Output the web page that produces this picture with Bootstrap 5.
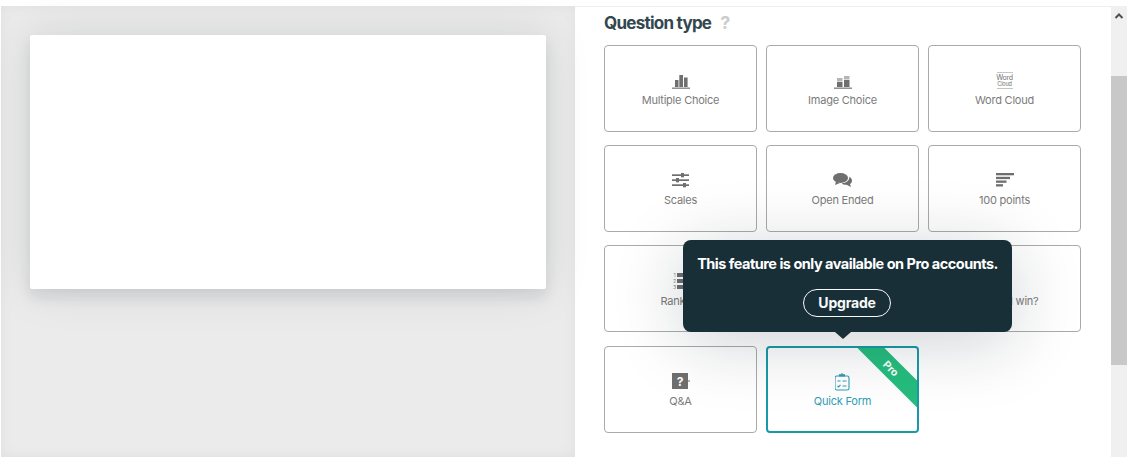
<!DOCTYPE html>
<html lang="en">
<head>
<meta charset="utf-8">
<title>Question type</title>
<link href="https://cdn.jsdelivr.net/npm/bootstrap@5.3.0/dist/css/bootstrap.min.css" rel="stylesheet">
<style>
html,body{height:457px;overflow:hidden;background:#fff;font-family:Inter,"Liberation Sans",sans-serif}
.app-shell{height:451px;margin-top:6px;padding-left:1px}
.stage-pane{width:574px;flex:none;background:#ebebeb;padding:29px 29px 0;box-shadow:inset 0 0 14px rgba(0,20,30,.05)}
.slide-sheet{height:254px;background:#fff;border-radius:2px;box-shadow:0 0 48px rgba(0,30,40,.11),0 8px 14px rgba(0,20,30,.09)}
.editor-pane{width:536px;flex:none;border-top:1px solid #eee;padding:0 0 0 29px;position:relative}
.pane-title{height:38px;color:#33474f;font-size:17px;font-weight:700;letter-spacing:-.75px;margin:0;padding-top:3px;line-height:26px}
.help-mark{color:#ccc;margin-left:9px;letter-spacing:0;font-size:18px}
.type-grid{display:grid;grid-template-columns:repeat(3,153px);grid-auto-rows:87px;column-gap:9px;row-gap:13.2px}
.type-tile{border:1px solid #aaa;border-radius:4px;color:#7b7b7b;font-size:11px;letter-spacing:-.22px;position:relative;overflow:hidden;background:transparent}
.tile-art{height:20px;margin-top:4px}
.type-tile.is-picked{border:2px solid #1a9aa8;color:#2f9db5}
.pro-ribbon{position:absolute;top:0;right:0;width:60px;height:60px;background:#26bd7e;clip-path:polygon(0 0,27px 0,60px 33px,60px 60px)}
.pro-ribbon span{position:absolute;left:25px;top:14px;color:#fff;font-size:10.5px;font-weight:700;line-height:14px;transform:rotate(45deg)}
.cloud-art{width:18px;height:20px;color:#6f6f6f;text-align:center;letter-spacing:-.2px;margin-top:3px;margin-bottom:1px}
.cloud-art i{display:block;height:1px;background:#c4c4c4;margin:1px}
.cloud-art b{display:block;font-weight:400;font-size:7px;line-height:7px}
.cloud-art b+b{font-size:5.5px;line-height:6px}
.pro-tip{position:absolute;left:108px;top:233px;width:329px;height:92px;background:#182f38;border-radius:8px;color:#fff;box-shadow:0 10px 70px rgba(0,25,35,.2);text-align:center;padding-top:14px}
.pro-tip::after{content:"";position:absolute;left:152px;bottom:-7px;border-style:solid;border-width:7px 8px 0;border-color:#182f38 transparent transparent}
.pro-tip p{margin:0 0 16px;font-size:14.5px;font-weight:700;letter-spacing:-.5px;line-height:19px}
.upgrade-btn{--bs-btn-padding-y:0;--bs-btn-padding-x:0;width:88px;height:28px;line-height:26px;font-size:14px;font-weight:700;letter-spacing:-.2px;margin-right:1px}
.scroll-rail{width:16px;background:#f0f0f0;flex:none}
.scroll-up{height:16px;display:block;margin:2px auto 0}
.scroll-thumb{height:289px;background:#c8c8c8;margin-top:52px}
</style>
</head>
<body>
<div class="app-shell d-flex">
  <div class="stage-pane"><div class="slide-sheet"></div></div>
  <div class="editor-pane">
    <h2 class="pane-title">Question type<span class="help-mark">?</span></h2>
    <div class="type-grid">
      <div class="type-tile d-flex flex-column align-items-center justify-content-center">
        <svg class="tile-art" width="18" height="20" viewBox="0 -2 18 20" fill="#6f6f6f"><rect x="3" y="6" width="3.500" height="7"/><rect x="7.300" y="1" width="3.700" height="12"/><rect x="12" y="3.500" width="3.600" height="9.500"/><rect y="13.500" width="18" height="1.400" fill="#888"/></svg>
        <span>Multiple Choice</span>
      </div>
      <div class="type-tile d-flex flex-column align-items-center justify-content-center">
        <svg class="tile-art" width="18" height="20" viewBox="0 -2 18 20"><rect x="3" y="4" width="5.500" height="3.500" fill="#b5b5b5"/><rect x="3" y="8" width="5.500" height="5" fill="#6f6f6f"/><rect x="10" y="2" width="5.500" height="3.500" fill="#b5b5b5"/><rect x="10" y="6" width="5.500" height="7" fill="#6f6f6f"/><rect y="13.500" width="18" height="1.400" fill="#888"/></svg>
        <span>Image Choice</span>
      </div>
      <div class="type-tile d-flex flex-column align-items-center justify-content-center">
        <div class="cloud-art"><i></i><b>Word</b><b>Cloud</b><i></i></div>
        <span>Word Cloud</span>
      </div>
      <div class="type-tile d-flex flex-column align-items-center justify-content-center">
        <svg class="tile-art" width="17" height="20" viewBox="0 0 17 20" fill="#6f6f6f"><rect y="2.300" width="17" height="1.700"/><rect x="9" y="1" width="3" height="4.300"/><rect y="7.300" width="17" height="1.700"/><rect x="4" y="6" width="3" height="4.300"/><rect y="12.300" width="17" height="1.700"/><rect x="11" y="11" width="3" height="4.300"/></svg>
        <span>Scales</span>
      </div>
      <div class="type-tile d-flex flex-column align-items-center justify-content-center">
        <svg class="tile-art" width="19" height="20" viewBox="0 0 19 20" fill="#6f6f6f"><ellipse cx="7.500" cy="6" rx="7.500" ry="5"/><path d="M3 9.500l-1 3.500 5-2z"/><path d="M16.300 4.800c1.700 1 2.700 2.300 2.700 3.900 0 1.400-.8 2.600-2 3.400l1 3-4.400-2.300c-2 .1-3.800-.4-5-1.600 3.900.2 8-2.300 7.700-6.400z"/></svg>
        <span>Open Ended</span>
      </div>
      <div class="type-tile d-flex flex-column align-items-center justify-content-center">
        <svg class="tile-art" width="18" height="20" viewBox="0 2 18 20" fill="#6f6f6f"><rect y="3" width="18" height="2.300"/><rect y="6.800" width="14" height="2.300"/><rect y="10.500" width="10.500" height="2.300"/><rect y="14.200" width="7" height="2.300"/></svg>
        <span>100 points</span>
      </div>
      <div class="type-tile d-flex flex-column align-items-center justify-content-center">
        <svg class="tile-art" width="18" height="20" viewBox="0 0 18 20" fill="#6f6f6f"><text x="2.500" y="4" text-anchor="middle" font-size="4.500" font-family="Inter,sans-serif">1</text><text x="2.500" y="10" text-anchor="middle" font-size="4.500" font-family="Inter,sans-serif">2</text><text x="2.500" y="16" text-anchor="middle" font-size="4.500" font-family="Inter,sans-serif">3</text><rect x="5" y="0" width="13" height="4"/><rect x="5" y="6" width="13" height="4"/><rect x="5" y="12" width="13" height="4"/></svg>
        <span>Ranking</span>
      </div>
      <div class="type-tile"></div>
      <div class="type-tile d-flex flex-column align-items-center justify-content-center">
        <div class="tile-art"></div>
        <span>Who will win?</span>
      </div>
      <div class="type-tile d-flex flex-column align-items-center justify-content-center">
        <svg class="tile-art" width="19" height="20" viewBox="0 2 19 20"><rect x="1" y="2" width="16" height="16" fill="#6f6f6f"/><path d="M17 9.500h2v1h-2z" fill="#6f6f6f"/><text x="9" y="14.500" text-anchor="middle" font-size="12" font-weight="700" fill="#fff" font-family="Inter,sans-serif">?</text></svg>
        <span>Q&amp;A</span>
      </div>
      <div class="type-tile is-picked d-flex flex-column align-items-center justify-content-center">
        <svg class="tile-art" width="16" height="20" viewBox="1 0 16 20" fill="none" stroke="#2f9db5" stroke-width="1.100"><rect x="1" y="3" width="14" height="14" rx="1.800"/><path d="M5.500 3V1.800h5V3z" fill="#2f9db5"/><path d="M8 0v2"/><path d="M3.500 8h3M8.500 8h4M3.500 13l1 1 2-2M8.500 13h4"/></svg>
        <span>Quick Form</span>
        <div class="pro-ribbon"><span>Pro</span></div>
      </div>
    </div>
    <div class="pro-tip">
      <p>This feature is only available on Pro accounts.</p>
      <button type="button" class="btn btn-outline-light rounded-pill upgrade-btn">Upgrade</button>
    </div>
  </div>
  <div class="scroll-rail">
    <svg class="scroll-up" width="10" height="8" viewBox="0 0 10 8" fill="none" stroke="#505050" stroke-width="2"><path d="M1.500 6l3.500-3.500 3.500 3.500"/></svg>
    <div class="scroll-thumb"></div>
  </div>
</div>
<script src="https://cdn.jsdelivr.net/npm/bootstrap@5.3.0/dist/js/bootstrap.bundle.min.js"></script>
</body>
</html>
